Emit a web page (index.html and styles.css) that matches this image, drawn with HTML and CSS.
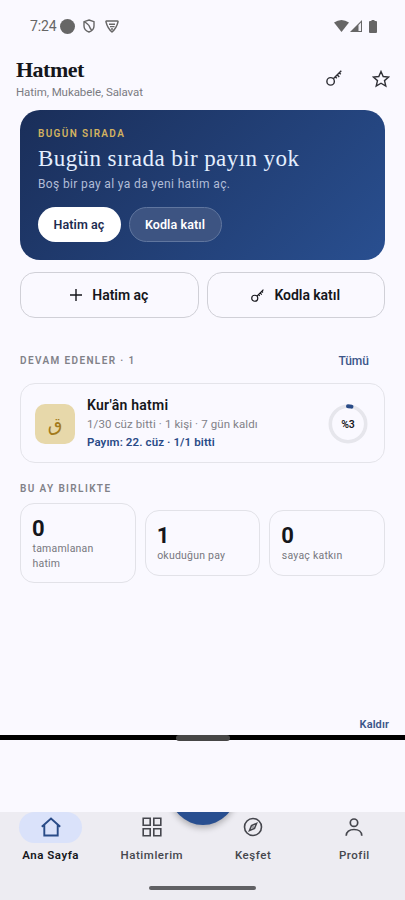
FILE: index.html
```html
<!DOCTYPE html>
<html lang="tr">
<head>
<meta charset="utf-8">
<meta name="viewport" content="width=device-width, initial-scale=1">
<title>Hatmet</title>
<link rel="stylesheet" href="styles.css">
</head>
<body>
<svg class="defs" width="0" height="0">
  <symbol id="key" viewBox="0 0 18 18"><g fill="none" stroke="currentColor" stroke-width="1.6"><circle cx="5.2" cy="12.8" r="4.200"/><path d="M8.200 9.800 17.200 .8M12.600 5.400l2.300 2.400M14.900 3.100l1.700 1.700M10.400 7.600l1.700 1.800"/></g></symbol>
</svg>
<div class="app">
  <div class="status">
    <span class="time">7:24</span>
    <span class="dot"></span>
    <svg class="shield" width="12" height="14" viewBox="0 0 12 14"><path d="M6 1 11 2.7V7c0 3-2 5-5 6-3-1-5-3-5-6V2.7zM2 3l3 2.500C7 7 6 8.500 8.500 11" fill="none" stroke="#666" stroke-width="1.4"/></svg>
    <svg class="tri" width="14" height="13" viewBox="0 0 14 13"><path d="M1.500 1h11q.8 0 .5 1C12 6 10 9.500 7 12 4 9.500 2 6 1 2q-.3-1 .5-1z" fill="none" stroke="#666" stroke-width="1.4"/><path d="M4 3.500h6v1.500H4zM5 6h4.500v1.300H5zM6 8.200h2v1.500H6z" fill="#666"/></svg>
    <span class="signals">
      <svg width="15" height="12" viewBox="0 0 15 12"><path d="M0 2.500Q7.500-2.500 15 2.500L7.500 12z" fill="#666"/></svg>
      <svg width="12" height="12" viewBox="0 0 12 12"><path d="M0 12 12 0v12z" fill="#666"/><path d="M8.500 5 11 2.400V11H8.500z" fill="#f0eff5"/></svg>
      <svg class="battery" width="8" height="13" viewBox="0 0 8 13"><path d="M2.500 0h3v1H7q1 0 1 1v10q0 1-1 1H1q-1 0-1-1V2q0-1 1-1h1.500z" fill="#666"/></svg>
    </span>
  </div>
  <header class="header">
    <div>
      <h1>Hatmet</h1>
      <p>Hatim, Mukabele, Salavat</p>
    </div>
    <div class="actions">
      <svg width="16" height="16"><use href="#key"/></svg>
      <svg width="18" height="18" viewBox="0 0 18 18"><path d="m9 1.500 2.200 5 5.500.5-4.200 3.600 1.300 5.500L9 13.200l-4.800 2.900 1.300-5.500L1.300 7l5.500-.5z" fill="none" stroke="#2f3036" stroke-width="1.400"/></svg>
    </div>
  </header>
  <main>
    <section class="hero">
      <div class="eyebrow">BUGÜN SIRADA</div>
      <h2>Bugün sırada bir payın yok</h2>
      <p>Boş bir pay al ya da yeni hatim aç.</p>
      <div class="pills"><button class="pill solid"><span>Hatim aç</span></button><button class="pill glass"><span>Kodla katıl</span></button></div>
    </section>
    <div class="buttons">
      <button class="outline"><svg width="12" height="12" viewBox="0 0 12 12"><path d="M6 0v12M0 6h12" stroke="currentColor" stroke-width="1.400"/></svg><span>Hatim aç</span></button>
      <button class="outline"><svg width="13" height="13"><use href="#key"/></svg><span>Kodla katıl</span></button>
    </div>
    <div class="section-head"><h3>DEVAM EDENLER · 1</h3><a>Tümü</a></div>
    <article class="hatim">
      <div class="tile"><span>ق</span></div>
      <div class="info">
        <h4>Kur'ân hatmi</h4>
        <p class="meta">1/30 cüz bitti · 1 kişi · 7 gün kaldı</p>
        <p class="share">Payım: 22. cüz · 1/1 bitti</p>
      </div>
      <svg class="ring" width="40" height="40" viewBox="0 0 40 40"><circle cx="20" cy="20" r="17.700" fill="none" stroke="#e6e6ec" stroke-width="3.600"/><path d="M20 2.300A17.700 17.700 0 0 1 23.500 2.650" fill="none" stroke="#294b87" stroke-width="4" stroke-linecap="round"/><text x="20" y="24" text-anchor="middle">%3</text></svg>
    </article>
    <h3 class="month">BU AY BIRLIKTE</h3>
    <div class="stats">
      <div class="stat"><b>0</b><span>tamamlanan hatim</span></div>
      <div class="stat"><b>1</b><span>okuduğun pay</span></div>
      <div class="stat"><b>0</b><span>sayaç katkın</span></div>
    </div>
  </main>
  <div class="remove"><a>Kaldır</a></div>
  <div class="divider"><i></i></div>
  <nav>
    <div class="fab-clip"><div class="fab"></div></div>
    <div class="tab active"><div class="icon"><svg width="20" height="20" viewBox="0 0 20 20"><path d="M.8 9.800 10 1.500l9.200 8.300M3.300 7.800V18.500h13.400V7.800" fill="none" stroke="currentColor" stroke-width="1.900"/></svg></div><span>Ana Sayfa</span></div>
    <div class="tab"><div class="icon"><svg width="20" height="20" viewBox="0 0 20 20"><path d="M1.200 1.200h7v7h-7zM11.800 1.200h7v7h-7zM1.200 11.800h7v7h-7zM11.800 11.800h7v7h-7z" fill="none" stroke="currentColor" stroke-width="1.600"/></svg></div><span>Hatimlerim</span></div>
    <div class="tab"><div class="icon"><svg width="20" height="20" viewBox="0 0 20 20"><g fill="none" stroke="currentColor" stroke-width="1.600"><circle cx="10" cy="10" r="8.500"/><path d="m13.500 6.500-2 5-5 2 2-5z"/></g><circle cx="10" cy="10" r=".8" fill="currentColor"/></svg></div><span>Keşfet</span></div>
    <div class="tab"><div class="icon"><svg width="20" height="20" viewBox="0 0 20 20"><g fill="none" stroke="currentColor" stroke-width="1.700"><circle cx="10" cy="5.700" r="3.700"/><path d="M2.200 18.800c0-4 3.200-6.300 7.800-6.300s7.800 2.300 7.800 6.300"/></g></svg></div><span>Profil</span></div>
    <div class="home-bar"></div>
  </nav>
</div>
</body>
</html>
```

FILE: styles.css
```css
* { box-sizing: border-box; }
body { margin: 0; background: #faf9ff; font-family: Roboto, "Liberation Sans", sans-serif; color: #15161b; }
h1, h2, h3, h4, p { margin: 0; }
button { font: inherit; padding: 0; }
svg { display: block; flex: none; }
.defs { position: absolute; }
.app { width: 405px; height: 900px; display: flex; flex-direction: column; overflow: hidden; }

.status { height: 52px; flex: none; display: flex; align-items: center; padding: 0 27px 0 30px; color: #666; }
.time { font-size: 14px; width: 26px; letter-spacing: -.1px; white-space: nowrap; }
.dot { width: 15px; height: 15px; border-radius: 50%; background: #666; margin-left: 4px; }
.shield { margin-left: 8px; }
.tri { margin-left: 10px; }
.signals { margin-left: auto; margin-right: 1px; display: flex; align-items: center; }
.signals svg + svg { margin-left: 1px; }
.signals .battery { margin-left: 7px; }

.header { height: 58px; flex: none; display: flex; justify-content: space-between; padding: 5px 15px 0 16px; }
.header h1 { font: bold 22px/26px "Liberation Serif", serif; letter-spacing: -.5px; }
.header p { font-size: 11.500px; line-height: 16px; margin-top: 1px; color: #7b7b82; letter-spacing: -.08px; }
.actions { display: flex; gap: 30px; padding-top: 13px; color: #2f3036; }

main { padding: 0 20px; flex: none; }
.hero { height: 150px; border-radius: 20px; padding: 16px 18px; background: linear-gradient(135deg, #1a2e59, #294f90); }
.eyebrow { font-size: 10px; line-height: 15px; font-weight: 600; color: #d3b260; letter-spacing: 1.350px; }
.hero h2 { font: 400 23px/30px "Liberation Serif", serif; color: #e4efff; margin-top: 3px; white-space: nowrap; letter-spacing: .42px; }
.hero p { font-size: 12px; line-height: 16px; margin-top: 2px; color: #b1bdd7; letter-spacing: .36px; }
.pills { display: flex; gap: 8px; margin-top: 15px; margin-left: -.5px; }
.pill { height: 35px; border-radius: 18px; border: 0; font-size: 12.500px; font-weight: 600; letter-spacing: .1px; }
.solid { width: 83px; background: #fff; color: #1d2c50; }
.glass { width: 93px; background: #3d5482; border: 1px solid #60769f; color: #fff; }

.buttons { display: flex; gap: 8px; margin-top: 12px; }
.outline { flex: 1; height: 46px; border: 1px solid #d0d0d7; border-radius: 15px; background: transparent; display: flex; align-items: center; justify-content: center; gap: 10px; font-size: 14px; font-weight: 600; letter-spacing: -.05px; color: #15161b; }

h3 { font-size: 10px; line-height: 14px; font-weight: 600; letter-spacing: 1.380px; color: #818188; }
.section-head { display: flex; justify-content: space-between; align-items: center; margin-top: 34px; height: 18px; padding-right: 16px; }
.section-head a { font-size: 12px; font-weight: 500; color: #3b5589; letter-spacing: 0; }
.hatim { height: 80px; margin-top: 13px; border: 1.500px solid #e4e4ea; border-radius: 15px; padding: 2px 16px 0 14px; display: flex; align-items: center; }
.tile { width: 40px; height: 40px; border-radius: 10px; background: #e7d8aa; display: grid; place-items: center; color: #a37b1c; font: 19px/30px "DejaVu Sans", sans-serif; }
.info { margin-left: 12px; flex: 1; white-space: nowrap; }
.info h4 { font-size: 14px; line-height: 19px; font-weight: 600; letter-spacing: .25px; }
.meta { font-size: 11.500px; line-height: 18px; color: #818188; letter-spacing: .1px; }
.share { font-size: 11.500px; line-height: 19px; font-weight: 600; color: #294b87; letter-spacing: .1px; }
.ring text { font-size: 10.500px; font-weight: 600; fill: #15161b; }
.month { margin-top: 19px; }
.stats { display: grid; grid-template-columns: repeat(3, 1fr); gap: 9px; align-items: center; margin-top: 7px; }
.stat { border: 1px solid #e2e2e8; border-radius: 14px; padding: 12px 12px 11px; min-height: 66px; }
.stat b { display: block; font-size: 22px; line-height: 25px; font-weight: 700; margin-left: -1px; }
.stat span { display: block; font-size: 10.500px; line-height: 15px; color: #77777e; letter-spacing: .22px; margin-left: -.5px; }

.remove { margin-top: auto; height: 20px; flex: none; text-align: right; padding-right: 16px; font-size: 11px; line-height: 20px; font-weight: 600; color: #3b5589; letter-spacing: .1px; }
.divider { height: 5px; flex: none; background: #000; }
.divider i { display: block; width: 54px; height: 6px; margin: 0 auto; background: #464646; border-radius: 3px; }

nav { position: relative; height: 88px; margin-top: 72px; flex: none; background: #edecf2; display: grid; grid-template-columns: repeat(4, 1fr); }
.tab { display: flex; flex-direction: column; align-items: center; color: #45464d; font-size: 11.500px; line-height: 16px; font-weight: 500; letter-spacing: .53px; }
.icon { width: 63px; height: 31px; display: grid; place-items: center; margin-bottom: 4px; }
.icon svg { margin-top: -1px; }
.active { color: #15161b; font-weight: 600; }
.active .icon { background: #dae2fa; border-radius: 15.500px; color: #294b87; }
.fab-clip { position: absolute; left: 160px; top: 0; width: 85px; height: 32px; overflow: hidden; }
.fab { width: 66px; height: 66px; border-radius: 50%; background: #294f90; margin: -53px auto 0; box-shadow: 0 3px 6px #0004; }
.home-bar { position: absolute; left: 149px; bottom: 10px; width: 107px; height: 4px; border-radius: 2px; background: #606064; }
```
